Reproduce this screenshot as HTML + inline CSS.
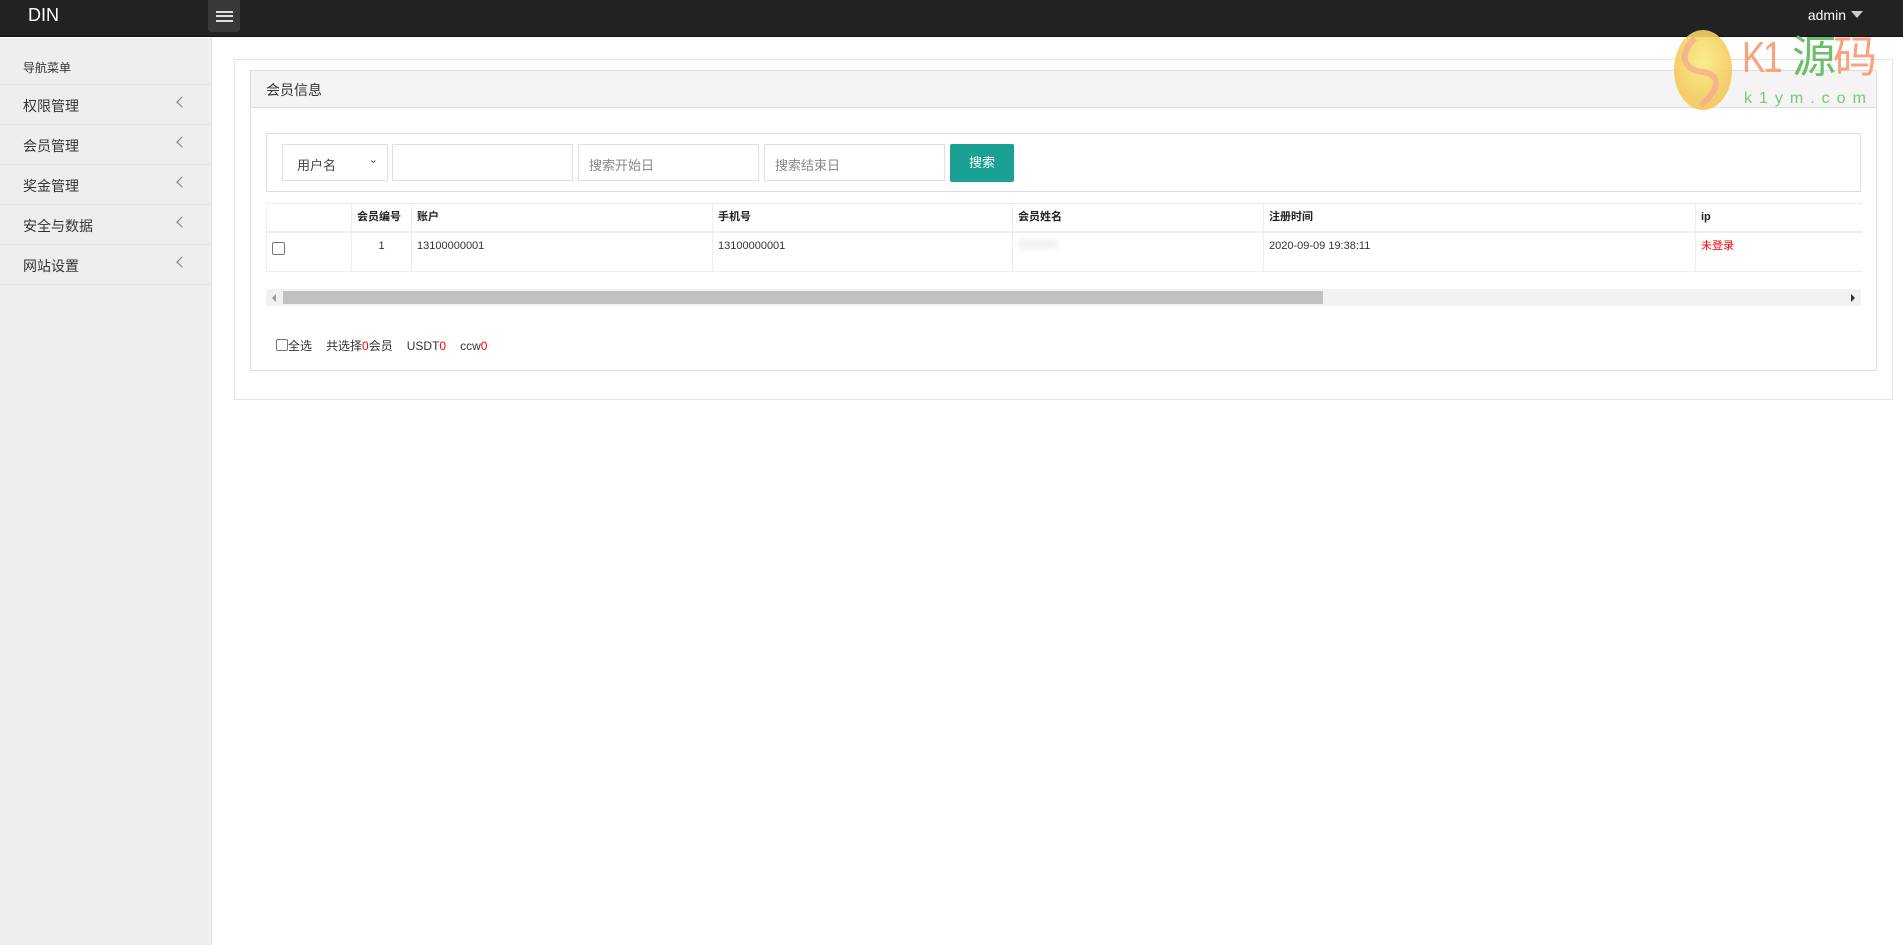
<!DOCTYPE html>
<html><head><meta charset="utf-8"><style>
*{box-sizing:border-box;margin:0;padding:0}
body{width:1903px;height:945px;overflow:hidden;background:#fff;font-family:"Liberation Sans","Noto Sans CJK SC",sans-serif;color:#333;position:relative}
.hd{position:absolute;left:0;top:0;width:1903px;height:37px;background:#222;border-bottom:1px solid #111}
.logo{position:absolute;left:28px;top:5px;color:#fff;font-size:18px}
.hb{position:absolute;left:208px;top:0;width:32px;height:32px;background:#393939;border-radius:0 0 3px 3px}
.hb i{position:absolute;left:8px;width:17px;height:1.5px;background:#ddd}
.adm{position:absolute;right:40px;top:7px;color:#fff;font-size:14px}
.adm:after{content:"";display:inline-block;margin-left:5px;border-left:6px solid transparent;border-right:6px solid transparent;border-top:7px solid #ccc;vertical-align:2px}
.sb{position:absolute;left:0;top:38px;width:212px;height:907px;background:#eee;border-right:1px solid #e2e2e2}
.nt{height:47px;padding:21px 0 0 23px;font-size:12px;border-bottom:1px solid #e2e2e2}
.mi{height:40px;border-bottom:1px solid #e2e2e2;padding:11px 0 0 23px;font-size:14px;position:relative}
.mi:after{content:"";position:absolute;left:178px;top:13px;width:7px;height:7px;border-left:1px solid #777;border-bottom:1px solid #777;transform:rotate(45deg)}
.ob{position:absolute;left:234px;top:59px;width:1659px;height:341px;border:1px solid #e4e4e4}
.pn{position:absolute;left:250px;top:70px;width:1627px;height:301px;border:1px solid #ddd}
.ph{height:37px;background:#f4f4f4;border-bottom:1px solid #ddd;padding:9px 0 0 15px;font-size:14px}
.sr{position:absolute;left:266px;top:133px;width:1595px;height:59px;border:1px solid #ddd}
.f{position:absolute;top:144px;height:37px;border:1px solid #e0e0e0;font-size:13px;color:#888;padding:10px 0 0 10px;background:#fff}
.btn{position:absolute;left:950px;top:144px;width:64px;height:38px;background:#1aa194;border-radius:2px;color:#fff;font-size:13px;text-align:center;line-height:38px}
table{position:absolute;left:266px;top:203px;border-collapse:collapse;font-size:11px;table-layout:fixed}
td{border:1px solid #eee;vertical-align:top;padding:6px 5px 0;line-height:14px}
tr.h td{height:28px;font-weight:bold;border-bottom:2px solid #eee;color:#222;padding-top:6px}
tr.r td{height:40px;padding-top:6px}
.sc{position:absolute;left:266px;top:289px;width:1595px;height:17px;background:#f1f1f1}
.th{position:absolute;left:17px;top:2px;width:1040px;height:13px;background:#c1c1c1}
.ft{position:absolute;left:276px;top:339px;font-size:12px;line-height:14px}
.ft b{font-weight:normal;display:inline-block;width:14px}
.red{color:#f00}
</style></head><body>
<div class="hd"><div class="logo">DIN</div><div class="hb"><i style="top:11px"></i><i style="top:15px"></i><i style="top:20px"></i></div><div class="adm">admin</div></div>
<div class="sb"><div class="nt">导航菜单</div><div class="mi">权限管理</div><div class="mi">会员管理</div><div class="mi">奖金管理</div><div class="mi">安全与数据</div><div class="mi">网站设置</div></div>
<div class="ob"></div>
<div class="pn"><div class="ph">会员信息</div></div>
<div class="sr"></div>
<div class="f" style="left:282px;width:106px;color:#444;padding-left:14px">用户名<span style="position:absolute;right:9px;top:8px;font-size:11px">&#8964;</span></div>
<div class="f" style="left:392px;width:181px"></div>
<div class="f" style="left:578px;width:181px">搜索开始日</div>
<div class="f" style="left:764px;width:181px">搜索结束日</div>
<div class="btn">搜索</div>
<table>
<colgroup><col style="width:85px"><col style="width:60px"><col style="width:301px"><col style="width:300px"><col style="width:251px"><col style="width:432px"><col style="width:166px"></colgroup>
<tr class="h"><td></td><td>会员编号</td><td>账户</td><td>手机号</td><td>会员姓名</td><td>注册时间</td><td style="border-right:none">ip</td></tr>
<tr class="r"><td><span style="display:inline-block;width:13px;height:13px;border:1px solid #777;border-radius:2px;margin-top:3px"></span></td><td style="text-align:center">1</td><td>13100000001</td><td>13100000001</td><td><span style="display:inline-block;width:40px;height:10px;background:#f2f2f2;filter:blur(3px)"></span></td><td>2020-09-09 19:38:11</td><td class="red" style="border-right:none">未登录</td></tr>
</table>
<div class="sc"><span style="position:absolute;left:6px;top:5px;border-top:4px solid transparent;border-bottom:4px solid transparent;border-right:4px solid #999"></span><div class="th"></div><span style="position:absolute;right:6px;top:5px;border-top:4px solid transparent;border-bottom:4px solid transparent;border-left:4px solid #333"></span></div>
<div class="ft"><span style="display:inline-block;width:12px;height:12px;border:1px solid #777;border-radius:2px;vertical-align:-1px"></span>全选<b></b>共选择<span class="red">0</span>会员<b></b>USDT<span class="red">0</span><b></b>ccw<span class="red">0</span></div>
<svg style="position:absolute;left:1673px;top:30px" width="60" height="80"><defs><radialGradient id="g" cx="50%" cy="40%"><stop offset="0" stop-color="#fbeb80"/><stop offset="1" stop-color="#f3c95a"/></radialGradient></defs><ellipse cx="30" cy="40" rx="29" ry="40" fill="url(#g)" opacity=".9"/><path d="M22 8 C5 25 10 40 30 42 C50 45 45 62 28 75" stroke="#f4a890" stroke-width="6" fill="none" opacity=".7"/></svg>
<div style="position:absolute;left:1742px;top:32px;font-size:44px;line-height:52px;letter-spacing:-3px;white-space:nowrap"><span style="color:#f9a27e;display:inline-block;transform:scaleX(.8);transform-origin:left;width:50px">K1</span><span style="color:#6cbf6a">源</span><span style="color:#f9a27e">码</span></div>
<div style="position:absolute;left:1744px;top:90px;font-size:16px;letter-spacing:7px;color:#7cc47a">k1ym.com</div>
</body></html>
